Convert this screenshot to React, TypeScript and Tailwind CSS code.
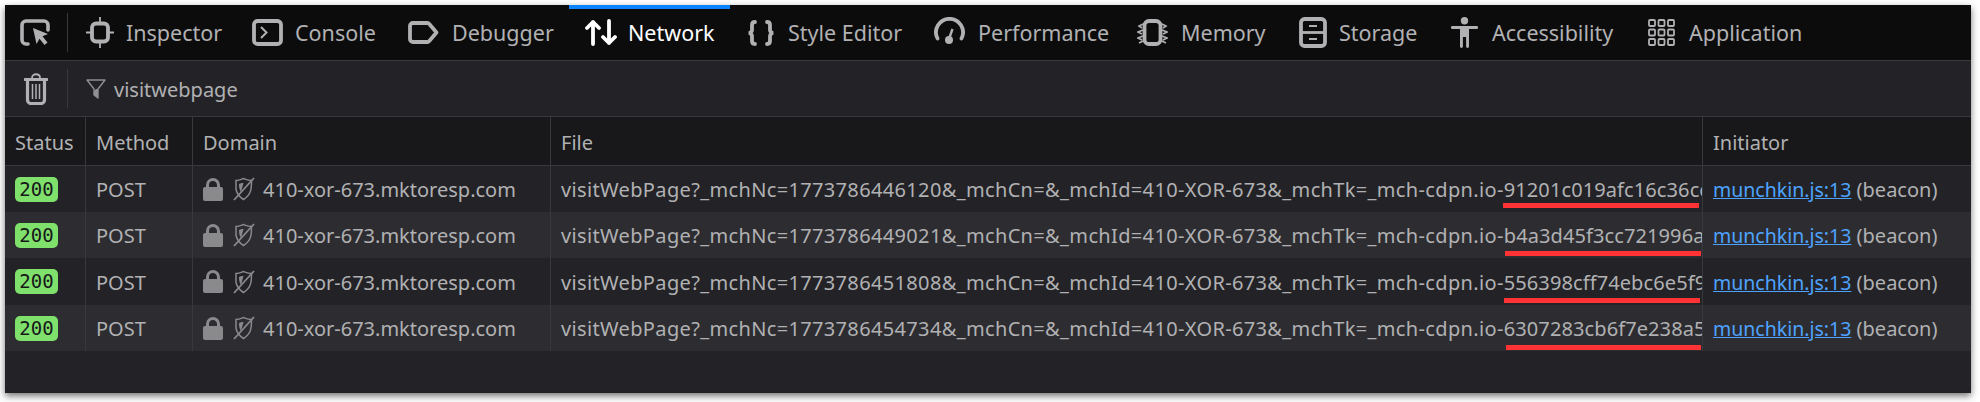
const font = { fontFamily: '"Noto Sans", "Open Sans", sans-serif' };

function SelectIcon() {
  return (
    <svg width="30" height="27" viewBox="0 0 30 27" fill="none">
      <path d="M8 25H6a4 4 0 0 1-4-4V6a4 4 0 0 1 4-4h18a4 4 0 0 1 4 4v5" stroke="currentColor" strokeWidth="3.6" strokeLinecap="round" />
      <path d="M13 9l15 6-5.500 2.200 5 6.300-3 2.500-5-6.300-3 5.300z" fill="currentColor" />
    </svg>
  );
}

function InspectorIcon() {
  return (
    <svg width="28" height="31" viewBox="0 0 28 31" fill="none" stroke="currentColor">
      <rect x="6" y="6.500" width="16" height="18" rx="4" strokeWidth="3.800" />
      <path d="M14 0v5M14 26v5M0 15.500h5M23 15.500h5" strokeWidth="1.800" />
    </svg>
  );
}

function ConsoleIcon() {
  return (
    <svg width="31" height="27" viewBox="0 0 31 27" fill="none" stroke="currentColor">
      <rect x="2" y="2" width="27" height="23" rx="3.500" strokeWidth="3.800" />
      <path d="M9 8l5.500 5.500L9 19" strokeWidth="2" />
    </svg>
  );
}

function DebuggerIcon() {
  return (
    <svg width="31" height="23" viewBox="0 0 31 23" fill="none" stroke="currentColor">
      <path d="M5 2h14.500a2 2 0 0 1 1.600.8L28.500 11.500l-7.400 8.700a2 2 0 0 1-1.600.8H5a3 3 0 0 1-3-3V5a3 3 0 0 1 3-3z" strokeWidth="3.800" strokeLinejoin="round" />
    </svg>
  );
}

function NetworkIcon() {
  return (
    <svg width="32" height="27" viewBox="0 0 32 27" fill="none" stroke="currentColor" strokeWidth="3.800" strokeLinecap="round" strokeLinejoin="round">
      <path d="M8 25V3M2 9l6-6 6 6" />
      <path d="M24 2v22M18 18l6 6 6-6" />
    </svg>
  );
}

function BracesIcon() {
  return (
    <svg width="28" height="26" viewBox="0 0 28 26" fill="none" stroke="currentColor" strokeWidth="3.800" strokeLinecap="round">
      <path d="M8 2C6 2 5 3 5 5v5c0 1.500-1 2.500-3 3 2 .5 3 1.500 3 3v5c0 2 1 3 3 3" />
      <path d="M20 2c2 0 3 1 3 3v5c0 1.500 1 2.500 3 3-2 .5-3 1.500-3 3v5c0 2-1 3-3 3" />
    </svg>
  );
}

function PerformanceIcon() {
  return (
    <svg width="31" height="27" viewBox="0 0 31 27" fill="none" stroke="currentColor" className="mb-[4px]">
      <path d="M3.500 21.500A13.500 13.500 0 1 1 27.500 21.500" strokeWidth="3.800" strokeLinecap="round" />
      <path d="M15 22l3.500-10" strokeWidth="2.400" />
      <circle cx="15" cy="23" r="4" fill="currentColor" stroke="none" />
    </svg>
  );
}

function MemoryIcon() {
  return (
    <svg width="31" height="27" viewBox="0 0 31 27" fill="none" stroke="currentColor">
      <rect x="7.500" y="2" width="16" height="23" rx="4.500" strokeWidth="3.800" />
      <path d="M6 5L2 7l3 2M6 11L1 13l4 2M6 17l-5 2 4 2M6 22l-4 2" strokeWidth="1.600" />
      <path d="M25 5l4 2-3 2M25 11l5 2-4 2M25 17l5 2-4 2M25 22l4 2" strokeWidth="1.600" />
    </svg>
  );
}

function StorageIcon() {
  return (
    <svg width="28" height="31" viewBox="0 0 28 31" fill="none" stroke="currentColor">
      <rect x="2" y="2" width="24" height="27" rx="3.500" strokeWidth="3.800" />
      <path d="M3 15.500h22" strokeWidth="2.800" />
      <path d="M10 9h8M10 22h8" strokeWidth="2.200" />
    </svg>
  );
}

function AccessibilityIcon() {
  return (
    <svg width="27" height="31" viewBox="0 0 27 31" fill="currentColor">
      <circle cx="13.500" cy="3.700" r="3.700" />
      <path d="M1.300 9h24.400a1.400 1.400 0 0 1 0 2.900H18V29.500a1.400 1.400 0 0 1-2.900 0V20h-3.200v9.500a1.400 1.400 0 0 1-2.900 0V11.900H1.300a1.400 1.400 0 0 1 0-2.900z" />
    </svg>
  );
}

function ApplicationIcon() {
  const cells = [1, 10.500, 20].flatMap((y) => [1, 10.500, 20].map((x) => ({ x, y })));
  return (
    <svg width="27" height="27" viewBox="0 0 27 27" fill="none" stroke="currentColor" strokeWidth="1.800">
      {cells.map((c) => (
        <rect key={`${c.x}-${c.y}`} x={c.x} y={c.y} width="6" height="6" rx="1" />
      ))}
    </svg>
  );
}

function TrashIcon() {
  return (
    <svg width="24" height="32" viewBox="0 0 24 32" fill="none" stroke="currentColor">
      <path d="M1 6.500h22" strokeWidth="3" strokeLinecap="round" />
      <path d="M8 5c0-5 8-5 8 0" strokeWidth="1.800" />
      <path d="M3.500 8v19a3.500 3.500 0 0 0 3.500 3.500h10a3.500 3.500 0 0 0 3.500-3.500V8" strokeWidth="3.200" />
      <path d="M8.500 11v15M12 11v15M15.500 11v15" strokeWidth="1.500" />
    </svg>
  );
}

function FilterIcon() {
  return (
    <svg width="20" height="20" viewBox="0 0 20 20">
      <path d="M1 1h18l-7 9v9l-4-3v-6z" fill="none" stroke="#8f8f92" strokeWidth="1.400" strokeLinejoin="round" />
      <path d="M10 10h2v9l-4-3v-4z" fill="#8f8f92" />
    </svg>
  );
}

function LockIcon() {
  return (
    <svg width="20" height="23" viewBox="0 0 20 23" fill="none">
      <path d="M4.500 10V7a5.500 5.500 0 0 1 11 0v3" stroke="#8a8a8d" strokeWidth="3" />
      <rect x="0" y="9" width="20" height="14" rx="2" fill="#8a8a8d" />
    </svg>
  );
}

function ShieldIcon() {
  return (
    <svg width="22" height="24" viewBox="0 0 22 24" fill="none" stroke="#8a8a8d">
      <path d="M3 3.500c3 0 5-1 7.500-2 2.500 1 4.500 2 8 2 0 8 0 14-8 19-4-2.500-6.500-6-7.500-10z" strokeWidth="1.500" />
      <path d="M10.500 6c-2 0-3.500.6-4.500 1 0 3 .5 6 2 8z" fill="#8a8a8d" stroke="none" />
      <path d="M1 23L21 1" strokeWidth="1.800" />
    </svg>
  );
}

const tabs = [
  { label: 'Inspector', icon: <InspectorIcon />, cls: 'w-[167px] pl-[16px] gap-[12px]' },
  { label: 'Console', icon: <ConsoleIcon />, cls: 'w-[155px] pl-[15px] gap-[12px]' },
  { label: 'Debugger', icon: <DebuggerIcon />, cls: 'w-[177px] pl-[16px] gap-[13px]' },
  { label: 'Network', icon: <NetworkIcon />, cls: 'w-[161px] pl-[16px] gap-[11px]', active: true },
  { label: 'Style Editor', icon: <BracesIcon />, cls: 'w-[190px] pl-[17px] gap-[13px]' },
  { label: 'Performance', icon: <PerformanceIcon />, cls: 'w-[201px] pl-[14px] gap-[13px]' },
  { label: 'Memory', icon: <MemoryIcon />, cls: 'w-[160px] pl-[16px] gap-[13px]' },
  { label: 'Storage', icon: <StorageIcon />, cls: 'w-[152px] pl-[18px] gap-[12px]' },
  { label: 'Accessibility', icon: <AccessibilityIcon />, cls: 'w-[199px] pl-[18px] gap-[14px]' },
  { label: 'Application', icon: <ApplicationIcon />, cls: 'w-[188px] pl-[16px] gap-[14px]' },
];

const rows = [
  { nc: '1773786446120', hash: '91201c019afc16c36cc', h: 'h-[46px]', line: 'top-[37px] left-[952px] w-[196px]' },
  { nc: '1773786449021', hash: 'b4a3d45f3cc721996a', h: 'h-[46px]', line: 'top-[39px] left-[954px] w-[196px]' },
  { nc: '1773786451808', hash: '556398cff74ebc6e5f9', h: 'h-[47px]', line: 'top-[40px] left-[953px] w-[196px]' },
  { nc: '1773786454734', hash: '6307283cb6f7e238a5', h: 'h-[46px]', line: 'top-[40px] left-[955px] w-[195px]' },
];

export default function App() {
  return (
    <div className="w-[1980px] h-[402px] bg-white pl-[5px] pt-[5px] overflow-hidden" style={font}>
      <div className="w-[1966px] h-[388px] bg-[#232327] text-[#b1b1b3] text-[20px] flex flex-col shadow-[0_3px_7px_rgba(0,0,0,0.55)]">
        {/* Tabs */}
        <div className="h-[56px] bg-[#0c0c0d] border-b border-[#38383d] flex items-center flex-shrink-0 text-[21.5px]">
          <div className="w-[62px] h-full flex items-center pl-[15px] text-[#b1b1b3]">
            <SelectIcon />
          </div>
          <div className="w-px h-[39px] bg-[#38383d] mr-[2px]" />
          {tabs.map((t) => (
            <div
              key={t.label}
              className={`${t.cls} h-full flex items-center relative ${t.active ? 'text-white' : 'text-[#b1b1b3]'}`}
            >
              {t.active && <div className="absolute top-0 left-0 right-0 h-[4px] bg-[#0a84ff]" />}
              <span className="flex-shrink-0">{t.icon}</span>
              <span className="pt-[2px]">{t.label}</span>
            </div>
          ))}
        </div>

        {/* Filter bar */}
        <div className="h-[56px] border-b border-[#38383d] flex items-center flex-shrink-0">
          <div className="w-[62px] flex items-center pl-[19px]">
            <TrashIcon />
          </div>
          <div className="w-px h-[39px] bg-[#38383d]" />
          <div className="flex items-center pl-[18px] gap-[8px]">
            <FilterIcon />
            <span className="pt-[2px]">visitwebpage</span>
          </div>
        </div>

        {/* Header */}
        <div className="h-[49px] bg-[#18181a] border-b border-[#38383d] flex items-center flex-shrink-0">
          <div className="w-[81px] h-full pl-[10px] pt-[4px] flex items-center border-r border-[#38383d]">Status</div>
          <div className="w-[107px] h-full pl-[10px] pt-[4px] flex items-center border-r border-[#38383d]">Method</div>
          <div className="w-[358px] h-full pl-[10px] pt-[4px] flex items-center border-r border-[#38383d]">Domain</div>
          <div className="w-[1152px] h-full pl-[10px] pt-[4px] flex items-center border-r border-[#38383d]">File</div>
          <div className="flex-1 pl-[10px] pt-[4px]">Initiator</div>
        </div>

        {/* Rows */}
        {rows.map((r, i) => (
          <div key={r.nc} className={`${r.h} flex items-center flex-shrink-0 ${i % 2 ? 'bg-[#2d2d31]' : 'bg-[#232327]'}`}>
            <div className="w-[81px] h-full pl-[10px] flex items-center border-r border-[#38383d]">
              <span
                className="w-[43px] h-[25px] rounded-[5px] bg-[#7fe06c] text-[#17171a] text-[19px] flex items-center justify-center"
                style={{ fontFamily: '"DejaVu Sans Mono", monospace' }}
              >
                200
              </span>
            </div>
            <div className="w-[107px] h-full pl-[10px] pt-[2px] flex items-center border-r border-[#38383d]">POST</div>
            <div className="w-[358px] h-full pl-[10px] flex items-center border-r border-[#38383d]">
              <LockIcon />
              <span className="ml-[10px]"><ShieldIcon /></span>
              <span className="ml-[8px] pt-[2px]">410-xor-673.mktoresp.com</span>
            </div>
            <div className="w-[1152px] h-full pl-[10px] pt-[2px] flex items-center border-r border-[#38383d] relative overflow-hidden whitespace-nowrap">
              <span className="tracking-[0.35px]">visitWebPage?_mchNc={r.nc}&amp;_mchCn=&amp;_mchId=410-XOR-673&amp;_mchTk=_mch-cdpn.io-</span>
              <span className="tracking-[0.1px]">{r.hash}</span>
              <div className={`absolute h-[5px] bg-[#ff3333] ${r.line}`} />
            </div>
            <div className="flex-1 pl-[10px] pt-[2px] whitespace-nowrap">
              <span className="text-[#4da3ff] underline text-[19.500px]">munchkin.js:13</span> (beacon)
            </div>
          </div>
        ))}
      </div>
    </div>
  );
}
